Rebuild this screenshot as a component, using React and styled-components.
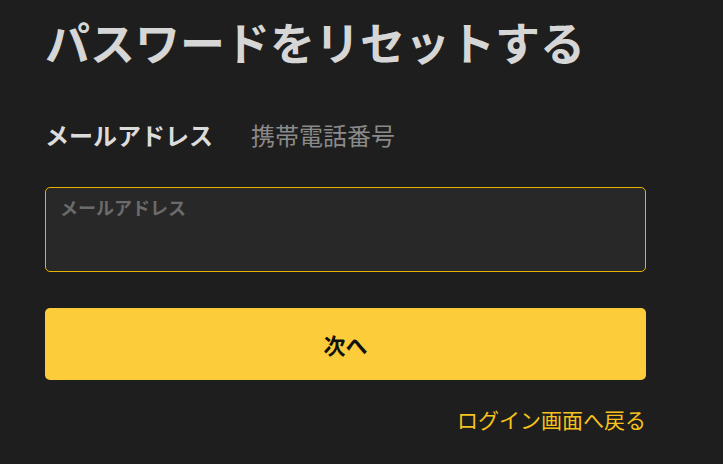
import React from "react";
import styled, { createGlobalStyle } from "styled-components";

const Global = createGlobalStyle`
  html, body { margin: 0; padding: 0; background: #1e1e1e; }
  body { font-family: "Noto Sans CJK JP", "Noto Sans", sans-serif; }
`;

const Page = styled.main`
  width: 601px;
  padding: 10px 0 0 45px;
  display: flex;
  flex-direction: column;
`;

const Title = styled.h1`
  margin: 0;
  font-size: 45px;
  line-height: 64px;
  font-weight: 700;
  color: #d6d6d6;
  letter-spacing: 0;
`;

const Tabs = styled.div`
  display: flex;
  gap: 38px;
  margin-top: 45px;
`;

const Tab = styled.button`
  background: none;
  border: 0;
  padding: 0;
  font-family: inherit;
  font-size: 24px;
  line-height: 32px;
  font-weight: ${(p) => (p.$active ? 700 : 400)};
  color: ${(p) => (p.$active ? "#dcdcdc" : "#8a8a8a")};
  cursor: pointer;
`;

const FieldBox = styled.label`
  display: block;
  margin-top: 36px;
  box-sizing: border-box;
  width: 601px;
  height: 85px;
  background: #282828;
  border: 1px solid #e8b000;
  border-radius: 5px;
`;

const Field = styled.textarea`
  display: block;
  box-sizing: border-box;
  width: 100%;
  height: 100%;
  resize: none;
  background: transparent;
  border: 0;
  padding: 6px 14px;
  font-family: inherit;
  font-size: 18px;
  font-weight: 600;
  color: #ddd;
  outline: none;
  &::placeholder { color: #6b6b6b; }
`;

const Submit = styled.button`
  margin-top: 36px;
  width: 601px;
  height: 72px;
  border: 0;
  border-radius: 5px;
  background: #fccc3a;
  color: #111;
  font-family: inherit;
  font-size: 22px;
  font-weight: 700;
  cursor: pointer;
`;

const Back = styled.a`
  align-self: flex-end;
  margin-top: 24px;
  font-size: 21px;
  line-height: 30px;
  color: #f7c21c;
  text-decoration: none;
`;

export default function App() {
  return (
    <>
      <Global />
      <Page>
        <Title>パスワードをリセットする</Title>
        <Tabs>
          <Tab $active>メールアドレス</Tab>
          <Tab>携帯電話番号</Tab>
        </Tabs>
        <FieldBox>
          <Field placeholder="メールアドレス" />
        </FieldBox>
        <Submit>次へ</Submit>
        <Back href="#">ログイン画面へ戻る</Back>
      </Page>
    </>
  );
}
